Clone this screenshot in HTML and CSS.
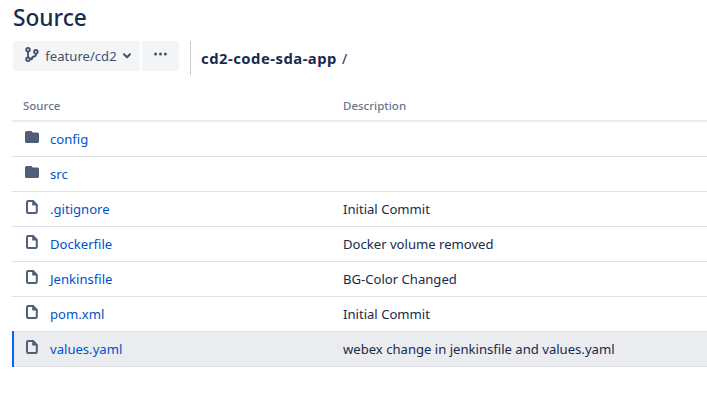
FILE: index.html
```html
<!DOCTYPE html>
<html lang="en">
<head>
<meta charset="utf-8">
<title>Source</title>
<link rel="stylesheet" href="styles.css">
</head>
<body>
<svg class="defs" aria-hidden="true">
  <symbol id="folder" viewBox="0 0 14 12"><path d="M0 1.6Q0 0 1.6 0H6.2Q7 0 7.6 1.4H12.4Q14 1.4 14 3V10.4Q14 12 12.4 12H1.6Q0 12 0 10.4Z" fill="currentColor"/></symbol>
  <symbol id="file" viewBox="0 0 12 14"><path d="M7 1H2.2Q1 1 1 2.2V11.8Q1 13 2.2 13H9.6Q10.8 13 10.8 11.8V5" fill="none" stroke="currentColor" stroke-width="2"/><path d="M6.2 0H7.5L11.8 4.5V5.4H6.2Z" fill="currentColor"/></symbol>
</svg>
<main class="page">
  <h1 class="title">Source</h1>
  <div class="toolbar">
    <button class="button branch">
      <svg class="branch-icon" viewBox="0 0 14 15" fill="none" stroke="currentColor" stroke-width="1.8"><circle cx="3" cy="2.7" r="1.8"/><circle cx="3" cy="12.3" r="1.8"/><circle cx="10.9" cy="4.8" r="1.8"/><path d="M3 4.5V10.5M10.9 6.6V7.5Q10.9 9.3 9.1 9.5Q6.9 9.7 6.8 12.1H4.8"/></svg>
      <span class="branch-name">feature/cd2</span>
      <svg class="chevron" viewBox="0 0 8 6" fill="none" stroke="currentColor" stroke-width="2" stroke-linecap="round" stroke-linejoin="round"><path d="M1 1.3L4 4.3L7 1.3"/></svg>
    </button>
    <button class="button more" aria-label="More">
      <svg class="dots" viewBox="0 0 13 4" fill="currentColor"><circle cx="1.6" cy="2" r="1.5"/><circle cx="6.5" cy="2" r="1.5"/><circle cx="11.4" cy="2" r="1.5"/></svg>
    </button>
    <div class="path"><b class="repo">cd2-code-sda-app</b><span class="slash">/</span></div>
  </div>
  <div class="table">
    <div class="row head"><span class="name">Source</span><span>Description</span></div>
    <div class="row"><span class="name"><svg class="folder"><use href="#folder"/></svg><a class="link">config</a></span></div>
    <div class="row"><span class="name"><svg class="folder"><use href="#folder"/></svg><a class="link">src</a></span></div>
    <div class="row"><span class="name"><svg class="file"><use href="#file"/></svg><a class="link">.gitignore</a></span><span class="description">Initial Commit</span></div>
    <div class="row"><span class="name"><svg class="file"><use href="#file"/></svg><a class="link">Dockerfile</a></span><span class="description">Docker volume removed</span></div>
    <div class="row"><span class="name"><svg class="file"><use href="#file"/></svg><a class="link">Jenkinsfile</a></span><span class="description">BG-Color Changed</span></div>
    <div class="row"><span class="name"><svg class="file"><use href="#file"/></svg><a class="link">pom.xml</a></span><span class="description">Initial Commit</span></div>
    <div class="row selected"><span class="name"><svg class="file"><use href="#file"/></svg><a class="link">values.yaml</a></span><span class="description">webex change in jenkinsfile and values.yaml</span></div>
  </div>
</main>
</body>
</html>
```
FILE: styles.css
```css
* { box-sizing: border-box; }
body { margin: 0; background: #fff; color: #172b4d; font: 13.1px/20px "Noto Sans", sans-serif; overflow: hidden; }
.defs { display: none; }
.page { padding: 4px 0 0 12px; }
.title { margin: 0 0 0 1px; height: 28px; font-size: 22.7px; line-height: 28px; font-weight: 500; }
.toolbar { display: flex; align-items: flex-start; height: 52px; padding: 9px 0 0 1px; }
.button { display: flex; align-items: center; height: 30px; padding: 0; border: 0; background: #f4f5f7; color: #42526e; font: inherit; }
.branch { width: 127px; padding-left: 12px; border-radius: 3px 0 0 3px; }
.branch-icon { width: 14px; height: 15px; margin: -4px 6px 0 0; }
.branch-name { width: 72px; white-space: nowrap; }
.chevron { width: 8px; height: 6px; margin-left: 6px; }
.more { width: 37px; margin-left: 2px; justify-content: center; border-radius: 0 3px 3px 0; }
.dots { width: 13px; height: 4px; margin-top: -4px; }
.path { display: flex; align-items: center; height: 34px; margin-left: 11px; padding: 1px 0 0 10px; border-left: 1px solid #ccc; }
.repo { font-size: 14.8px; line-height: 19px; font-weight: 700; letter-spacing: .5px; }
.slash { margin-left: 5px; font-size: 14px; }
.table { margin-top: 8px; }
.row { display: grid; grid-template-columns: 320px 1fr; align-items: center; height: 35px; padding-left: 11px; border-bottom: 1px solid #dfe1e6; }
.head { height: 30px; border-bottom: 2px solid #ebecf0; color: #6b778c; font-size: 11.5px; font-weight: 500; }
.name { display: flex; align-items: center; }
.folder { width: 14px; height: 12px; margin: -4px 11px 0 2px; color: #505f79; }
.file { width: 12px; height: 14px; margin: -4px 12px 0 3px; color: #505f79; }
.link { color: #0052cc; }
.selected { position: relative; background: #ebecf0; }
.selected::before { content: ""; position: absolute; top: -1px; bottom: -1px; left: 0; width: 2px; background: #0065ff; }
```
